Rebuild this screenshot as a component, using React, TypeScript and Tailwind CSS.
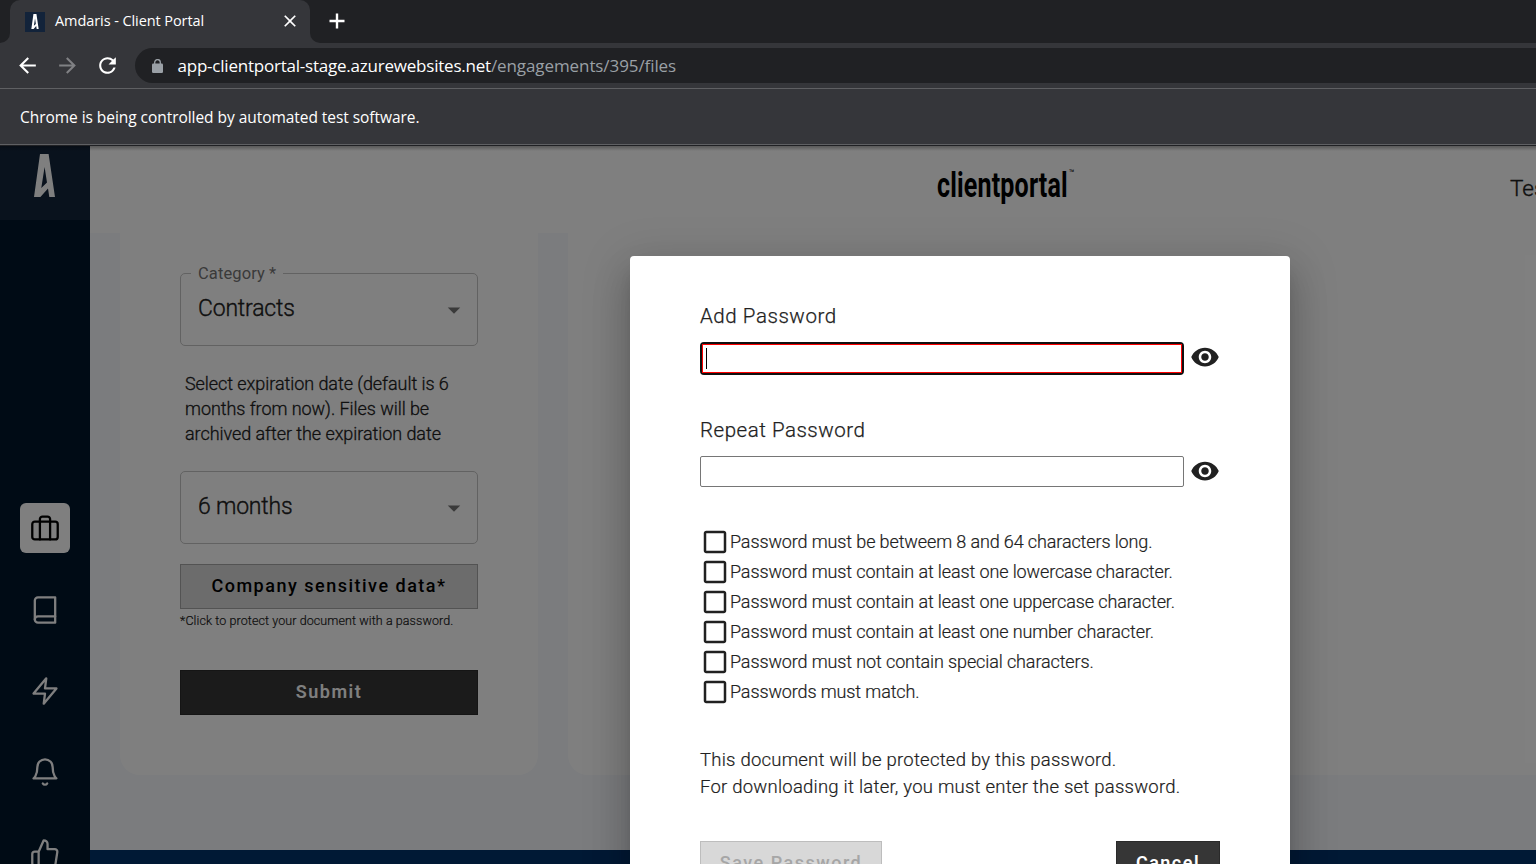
import React from "react";
import { FiBell, FiBook, FiBriefcase, FiThumbsUp, FiZap } from "react-icons/fi";
import {
  MdArrowBack,
  MdArrowDropDown,
  MdArrowForward,
  MdCheckBoxOutlineBlank,
  MdClose,
  MdRefresh,
  MdVisibility,
} from "react-icons/md";

const rules = [
  "Password must be betweem 8 and 64 characters long.",
  "Password must contain at least one lowercase character.",
  "Password must contain at least one uppercase character.",
  "Password must contain at least one number character.",
  "Password must not contain special characters.",
  "Passwords must match.",
];

const navItems = [
  { Icon: FiBriefcase, style: "rounded-md bg-white text-black" },
  { Icon: FiBook, style: "pt-[2px]" },
  { Icon: FiZap, style: "" },
  { Icon: FiBell, style: "" },
  { Icon: FiThumbsUp, style: "" },
];

function Logo({ className }: { className: string }) {
  return (
    <svg viewBox="0 0 21 43" className={className} fill="currentColor" fillRule="evenodd">
      <path d="M6 0h8.600L21 43h-5.700L14 34.500 6.400 43H0zM10.600 13L7.300 34l5.700-5.500z" />
    </svg>
  );
}

function Browser() {
  return (
    <div className="shrink-0 bg-[#35363a] font-['Open_Sans',sans-serif] text-white">
      <div className="flex h-[43px] bg-[#35363a]">
        <div className="w-2.5 rounded-br-[10px] bg-[#202124]" />
        <div className="flex w-[300px] items-center bg-[#202124]">
          <div className="flex h-full w-full items-center rounded-t-[10px] bg-[#35363a] pr-[10px] pl-[15px]">
            <div className="flex size-5 items-center justify-center bg-[#12233a]">
              <Logo className="h-[15px] w-[8px]" />
            </div>
            <span className="mb-[2px] ml-[10px] grow text-[14.5px] leading-5 tracking-[-0.08px] whitespace-nowrap">
              Amdaris - Client Portal
            </span>
            <MdClose className="mb-px size-[20px]" />
          </div>
        </div>
        <div className="flex grow items-center rounded-bl-[10px] bg-[#202124] pb-px pl-[19px]">
          <svg viewBox="0 0 16 16" className="size-4" fill="none" stroke="white" strokeWidth={2.4}>
            <path d="M.5 8h15M8 .5v15" />
          </svg>
        </div>
      </div>
      <div className="flex h-[45px] items-center pl-[15px]">
        <MdArrowBack className="size-[25px]" />
        <MdArrowForward className="ml-[15px] size-[25px] text-[#808184]" />
        <MdRefresh className="ml-[15px] size-[25px]" />
        <div className="ml-[15px] flex h-[35px] grow items-center rounded-l-full bg-[#202124] pl-[17px]">
          <svg viewBox="0 0 11 14" className="h-[14px] w-[11px]">
            <rect y="4.500" width="11" height="9.500" rx="1.200" fill="#9aa0a6" />
            <path d="M2.700 5V3.400a2.800 2.800 0 0 1 5.600 0V5" fill="none" stroke="#9aa0a6" strokeWidth="1.300" />
          </svg>
          <span className="ml-[14.500px] text-[17px] leading-6 tracking-[-0.22px] whitespace-nowrap">
            app-clientportal-stage.azurewebsites.net
          </span>
          <span className="text-[17px] leading-6 tracking-[-0.09px] whitespace-nowrap text-[#9aa0a6]">
            /engagements/395/files
          </span>
        </div>
      </div>
      <div className="flex h-[57px] items-center border-y border-[#5f6063] pt-[3px] pl-5 text-[15.5px] tracking-[-0.05px] whitespace-nowrap">
        Chrome is being controlled by automated test software.
      </div>
      <div className="h-px bg-[#202124]" />
    </div>
  );
}

function Sidebar() {
  return (
    <nav className="flex w-[90px] shrink-0 flex-col items-center bg-[#00162a] text-white">
      <div className="flex h-[74px] w-full shrink-0 justify-center bg-[#12243a] pt-2 pr-[2px]">
        <Logo className="h-[43px] w-[21px]" />
      </div>
      <div className="mt-[283px] flex flex-col gap-[31.25px]">
        {navItems.map(({ Icon, style }, i) => (
          <div key={i} className={`flex size-[50px] items-center justify-center ${style}`}>
            <Icon className="size-7" viewBox="1 1 22 22" strokeWidth={1.8} />
          </div>
        ))}
      </div>
    </nav>
  );
}

function Select({ label, value }: { label?: string; value: string }) {
  return (
    <div className="relative flex h-[73px] items-center justify-between rounded-[5px] border border-[#c4c4c4] pr-[8px] pl-[17px] text-[#212121]">
      {label && (
        <span className="absolute -top-[10px] left-[10px] bg-white px-[7px] text-[16.5px] leading-5 tracking-[0.1px] whitespace-nowrap text-[#757575]">
          {label}
        </span>
      )}
      <span className="pb-[2px] text-[23px] leading-8 font-light tracking-[-0.2px] whitespace-nowrap [-webkit-text-stroke:0.35px]">
        {value}
      </span>
      <MdArrowDropDown className="size-[30px] text-[#757575]" />
    </div>
  );
}

function Page() {
  return (
    <div className="flex min-w-0 grow flex-col bg-[#f6f8fc] text-[#212121]">
      <header className="flex h-[87px] shrink-0 items-start overflow-hidden bg-white">
        <div className="ml-[847px] flex w-[573px] shrink-0 pt-[16px] text-black">
          <span className="w-[131px] origin-left scale-x-[0.705] text-[35.5px] leading-[46px] font-bold tracking-[0.25px] whitespace-nowrap">
            clientportal
          </span>
          <span className="mt-[7px] ml-px text-[9px] leading-[8px]">™</span>
        </div>
        <span className="shrink-0 pt-[26px] text-[22.5px] leading-8 font-light whitespace-nowrap [-webkit-text-stroke:0.35px]">
          Test
        </span>
      </header>
      <div className="flex h-[542px] shrink-0 gap-[30px] pl-[30px]">
        <section className="w-[418px] shrink-0 rounded-b-[20px] bg-white px-[60px] pt-[40px]">
          <Select label="Category *" value="Contracts" />
          <p className="mt-[25px] ml-[5px] text-[18px] leading-[25px] font-light tracking-[-0.06px] whitespace-nowrap [-webkit-text-stroke:0.3px]">
            Select expiration date (default is 6
            <br />
            months from now). Files will be
            <br />
            archived after the expiration date
          </p>
          <div className="mt-[25px]">
            <Select value="6 months" />
          </div>
          <div className="mt-5 flex h-[45px] items-center justify-center border border-[#a6a6a6] bg-[#d8d8d8] pb-[2px] text-[18px] font-medium tracking-[1.5px] whitespace-nowrap text-black">
            Company sensitive data*
          </div>
          <p className="mt-[2px] text-[12.5px] leading-5 font-light tracking-[0.09px] whitespace-nowrap [-webkit-text-stroke:0.2px]">
            *Click to protect your document with a password.
          </p>
          <div className="mt-[39px] flex h-[45px] items-center justify-center border border-[#2a2a2a] bg-[#363636] pb-[2px] text-[18px] font-semibold tracking-[1.5px] text-white">
            Submit
          </div>
        </section>
        <section className="grow rounded-bl-[20px] bg-white" />
      </div>
      <footer className="mt-[75px] grow bg-[#00336a]" />
    </div>
  );
}

function Dialog() {
  return (
    <div className="absolute top-[110px] left-[630px] h-[700px] w-[660px] rounded bg-white px-[70px] pt-[44px] text-[#212121] shadow-[0_11px_15px_-7px_rgba(0,0,0,0.2),0_24px_38px_3px_rgba(0,0,0,0.14),0_9px_46px_8px_rgba(0,0,0,0.12)]">
      <label className="block text-[20.5px] leading-8 font-light tracking-[0.56px] whitespace-nowrap [-webkit-text-stroke:0.25px]">
        Add Password
      </label>
      <div className="mt-[10px] flex h-[33px] items-center">
        <div className="flex h-[33px] w-[484px] rounded-[4px] border-2 border-[#101010]">
          <div className="flex grow items-center border border-[#f00] pl-[3px]">
            <div className="h-[21px] w-px bg-black" />
          </div>
        </div>
        <MdVisibility className="mb-[3px] ml-[6px] size-[30px]" />
      </div>
      <label className="mt-[39px] block text-[20.5px] leading-8 font-light tracking-[0.53px] whitespace-nowrap [-webkit-text-stroke:0.25px]">
        Repeat Password
      </label>
      <div className="mt-[10px] flex h-[31px] items-center">
        <div className="h-[31px] w-[484px] rounded-[2px] border border-[#767676]" />
        <MdVisibility className="mb-[1px] ml-[6px] size-[30px]" />
      </div>
      <ul className="mt-10">
        {rules.map((rule) => (
          <li key={rule} className="flex h-[30px] items-center text-[18px] font-light tracking-[-0.12px] whitespace-nowrap">
            <MdCheckBoxOutlineBlank className="size-[30px] shrink-0" />
            <span className="pb-[2px] [-webkit-text-stroke:0.2px]">{rule}</span>
          </li>
        ))}
      </ul>
      <p className="mt-[40px] text-[18.5px] leading-[27px] font-light tracking-[0.23px] whitespace-nowrap [-webkit-text-stroke:0.2px]">
        This document will be protected by this password.
        <br />
        For downloading it later, you must enter the set password.
      </p>
      <div className="mt-[40px] flex justify-between">
        <div className="flex h-[45px] w-[182px] items-center justify-center border border-[#bdbdbd] bg-[#d8d8d8] pb-[2px] text-[18px] font-medium tracking-[1.5px] whitespace-nowrap text-[#a6a6a6]">
          Save Password
        </div>
        <div className="flex h-[45px] w-[104px] items-center justify-center border border-[#2a2a2a] bg-[#363636] pb-[2px] text-[18px] font-semibold tracking-[1.5px] text-white">
          Cancel
        </div>
      </div>
    </div>
  );
}

export default function App() {
  return (
    <div className="flex h-screen w-screen flex-col overflow-hidden font-['Roboto',sans-serif]">
      <Browser />
      <div className="relative flex min-h-0 grow overflow-hidden">
        <Sidebar />
        <Page />
        <div className="absolute inset-0 bg-black/50" />
        <Dialog />
        <div className="absolute inset-x-0 top-0 h-[5px] bg-linear-to-b from-black/30 to-transparent" />
      </div>
    </div>
  );
}
